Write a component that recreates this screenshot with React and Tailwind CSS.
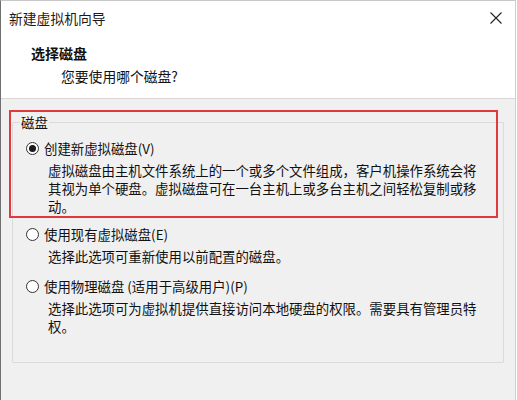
import React from "react";

const font = { fontFamily: '"Noto Sans CJK SC", "Noto Sans", sans-serif' };

function Radio({ checked }) {
  return (
    <span className="w-[13px] h-[13px] rounded-full border border-[#333333] bg-white flex items-center justify-center shrink-0">
      {checked && <span className="w-[7px] h-[7px] rounded-full bg-[#1a1a1a]" />}
    </span>
  );
}

function Option({ checked, label, lines, gapTop }) {
  return (
    <div className={gapTop}>
      <div className="flex items-center h-[18px] pl-[13px] gap-[5px]">
        <Radio checked={checked} />
        <span>{label}</span>
      </div>
      <div className="pl-[35px] mt-[4px]">
        {lines.map((l, i) => (
          <div key={i} className="whitespace-nowrap h-[18px] leading-[18px]">
            {l}
          </div>
        ))}
      </div>
    </div>
  );
}

export default function App() {
  return (
    <div
      className="w-[517px] h-[400px] overflow-hidden relative bg-white text-[#111111] text-[13.4px] leading-[18px]"
      style={font}
    >
      <div className="w-[516px] h-full flex flex-col border-l border-l-[#707070] border-r border-r-[#cfcfcf] border-t border-t-[#c8c8c8]">
        {/* Title bar */}
        <div className="h-[33px] flex items-center justify-between pl-[8px] pr-[12px] bg-white">
          <span className="text-[13.8px] text-[#1a1a1a]">新建虚拟机向导</span>
          <svg width="12" height="12" viewBox="0 0 12 12" className="mr-[1px]">
            <path d="M0.5 0.5 L11.5 11.5 M11.5 0.5 L0.5 11.5" stroke="#222" strokeWidth="1.1" fill="none" />
          </svg>
        </div>
        {/* Header */}
        <div className="h-[65px] bg-white border-b border-b-[#d6d6d6] pl-[30px] pt-[10px]">
          <div className="font-bold text-[14px] leading-[18px]">选择磁盘</div>
          <div className="pl-[30px] mt-[5px] text-[13.8px] leading-[18px]">您要使用哪个磁盘?</div>
        </div>
        {/* Body */}
        <div className="flex-1 bg-[#f0f0f0] pl-[11px] pt-[14px]">
          <fieldset className="w-[492px] h-[250px] border border-[#dadada] rounded-[1px]">
            <legend className="ml-[7px] px-[1px] leading-[18px]">磁盘</legend>
            <div className="pt-[8px]">
              <Option
                checked
                label="创建新虚拟磁盘(V)"
                lines={[
                  "虚拟磁盘由主机文件系统上的一个或多个文件组成，客户机操作系统会将",
                  "其视为单个硬盘。虚拟磁盘可在一台主机上或多台主机之间轻松复制或移",
                  "动。",
                ]}
              />
              <Option
                label="使用现有虚拟磁盘(E)"
                lines={["选择此选项可重新使用以前配置的磁盘。"]}
                gapTop="mt-[10px]"
              />
              <Option
                label="使用物理磁盘 (适用于高级用户)(P)"
                lines={[
                  "选择此选项可为虚拟机提供直接访问本地硬盘的权限。需要具有管理员特",
                  "权。",
                ]}
                gapTop="mt-[12px]"
              />
            </div>
          </fieldset>
        </div>
      </div>
      {/* Red annotation box */}
      <div className="absolute left-[9px] top-[110px] w-[489px] h-[108px] border-2 border-[#e03a3e] pointer-events-none" />
    </div>
  );
}
